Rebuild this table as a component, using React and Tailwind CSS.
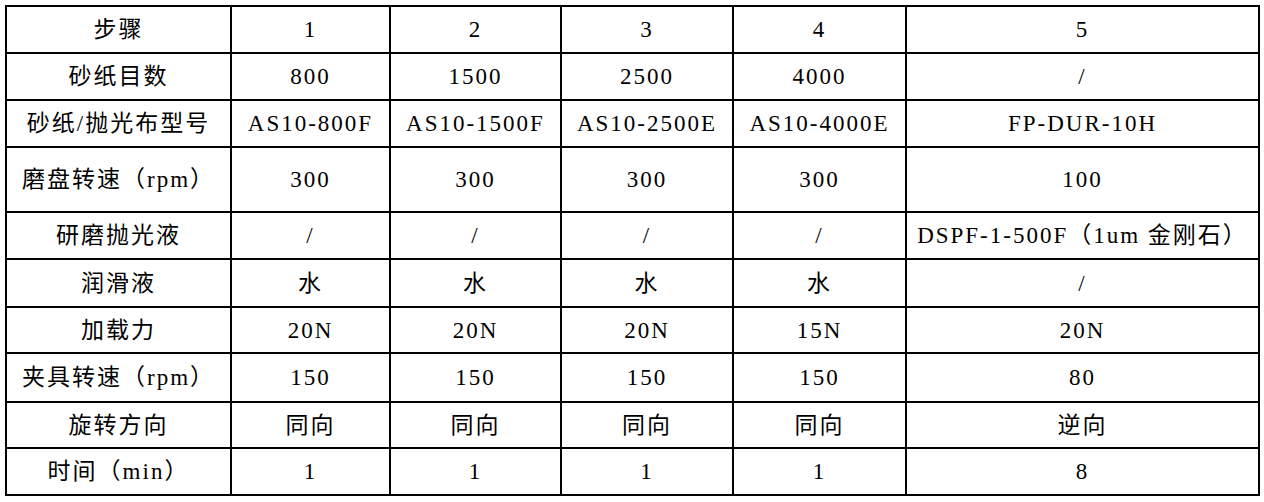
import React from "react";

const rows = [
  ["步骤", "1", "2", "3", "4", "5"],
  ["砂纸目数", "800", "1500", "2500", "4000", "/"],
  ["砂纸/抛光布型号", "AS10-800F", "AS10-1500F", "AS10-2500E", "AS10-4000E", "FP-DUR-10H"],
  ["磨盘转速（rpm）", "300", "300", "300", "300", "100"],
  ["研磨抛光液", "/", "/", "/", "/", "DSPF-1-500F（1um 金刚石）"],
  ["润滑液", "水", "水", "水", "水", "/"],
  ["加载力", "20N", "20N", "20N", "15N", "20N"],
  ["夹具转速（rpm）", "150", "150", "150", "150", "80"],
  ["旋转方向", "同向", "同向", "同向", "同向", "逆向"],
  ["时间（min）", "1", "1", "1", "1", "8"],
];

export default function App() {
  return (
    <div className="w-[1264px] h-[502px] bg-white pl-[5px] pt-[5px] font-['Liberation_Serif','Noto_Sans_CJK_SC',serif] text-black">
      <div className="inline-grid grid-cols-[223px_157px_169px_170px_171px_351px] grid-rows-[45px_45px_45px_63px_45px_46px_44px_47px_44px_45px] gap-[2px] border-2 border-black bg-black">
        {rows.flat().map((c, i) => (
          <div
            key={i}
            className="flex items-center justify-center bg-white text-[23px] leading-none tracking-[2px] whitespace-nowrap"
          >
            {c}
          </div>
        ))}
      </div>
    </div>
  );
}
